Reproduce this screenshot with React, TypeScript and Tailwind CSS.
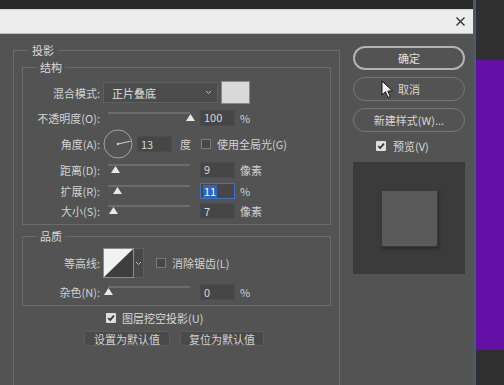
import React from "react";

function Thumb({ pct }: { pct: number }) {
  return (
    <svg
      width="9"
      height="7"
      viewBox="0 0 9 7"
      className="absolute top-[3px]"
      style={{ left: pct * 82 - 4.5 }}
    >
      <polygon points="4.5,0 9,7 0,7" fill="#e9e9e9" />
    </svg>
  );
}

function Slider({ pct }: { pct: number }) {
  return (
    <div className="relative ml-[8px] h-[14px] w-[82px] shrink-0">
      <div className="absolute left-0 right-0 top-[1px] h-[2px] bg-[#6c6c6c]" />
      <Thumb pct={pct} />
    </div>
  );
}

function NumField({ value, selected }: { value: string; selected?: boolean }) {
  return (
    <div
      className={`ml-[10px] flex h-[16px] w-[35px] shrink-0 items-center border pl-[2px] ${
        selected ? "border-[#3f74c4] bg-[#474747]" : "border-[#4c4c4c] bg-[#464646]"
      }`}
    >
      <span
        className={`px-[1px] leading-[13px] ${
          selected ? "bg-[#2a66c9] text-white" : "text-[#d8d8d8]"
        }`}
      >
        {value}
      </span>
    </div>
  );
}

function Check({ checked }: { checked?: boolean }) {
  if (checked) {
    return (
      <span className="flex h-[10px] w-[10px] shrink-0 items-center justify-center rounded-[1px] bg-[#dedede]">
        <svg width="8" height="8" viewBox="0 0 8 8">
          <path
            d="M1.2 4.2 L3.2 6.1 L6.9 1.6"
            fill="none"
            stroke="#333"
            strokeWidth="1.7"
          />
        </svg>
      </span>
    );
  }
  return (
    <span className="block h-[10px] w-[10px] shrink-0 border border-[#7a7a7a] bg-[#474747]" />
  );
}

function Label({ children }: { children: React.ReactNode }) {
  return (
    <span className="w-[77px] shrink-0 text-right text-[#d2d2d2]">
      {children}
    </span>
  );
}

function Chevron() {
  return (
    <svg width="7" height="5" viewBox="0 0 7 5">
      <path d="M1 1 L3.5 3.5 L6 1" fill="none" stroke="#bdbdbd" strokeWidth="1" />
    </svg>
  );
}

export default function App() {
  return (
    <div className="flex h-[385px] w-[504px] overflow-hidden bg-[#2c2c2c] font-['Noto_Sans_CJK_SC','Noto_Sans',sans-serif] text-[11px] leading-[14px]">
      {/* dialog */}
      <div className="flex w-[473px] shrink-0 flex-col">
        <div className="h-[9px] bg-[#2a2a2a]" />
        <div className="flex h-[25px] items-center justify-end border-t border-b border-t-[#c3d9ee] border-b-[#a8c0d8] bg-[#ececec] pr-[8px]">
          <svg width="9" height="9" viewBox="0 0 9 9">
            <path d="M0.5 0.5 L8.5 8.5 M8.5 0.5 L0.5 8.5" stroke="#2f2f2f" strokeWidth="1.3" />
          </svg>
        </div>

        <div className="relative flex flex-1 overflow-hidden bg-[#535353]">
          {/* left: settings */}
          <div className="w-[345px] shrink-0">
            <fieldset className="ml-[13px] mt-[9px] h-[400px] w-[327px] border border-[#6c6c6c]">
              <legend className="ml-[14px] px-[4px] text-[#dadada]">投影</legend>

              <fieldset className="ml-[8px] mt-[3px] w-[309px] border border-[#6c6c6c] pb-[3px] pt-[6px]">
                <legend className="ml-[14px] px-[3px] text-[#dadada]">结构</legend>

                <div className="flex h-[25px] items-center">
                  <Label>混合模式:</Label>
                  <div className="ml-[3px] flex h-[21px] w-[115px] items-center justify-between border border-[#5f5f5f] bg-[#4c4c4c] pl-[8px] pr-[5px] text-[#e0e0e0]">
                    <span>正片叠底</span>
                    <Chevron />
                  </div>
                  <div className="ml-[3px] h-[23px] w-[29px] border border-[#8a8a8a] bg-[#d9d9d9]" />
                </div>

                <div className="flex h-[25px] items-center">
                  <Label>不透明度(O):</Label>
                  <Slider pct={1} />
                  <NumField value="100" />
                  <span className="ml-[5px] text-[#d2d2d2]">%</span>
                </div>

                <div className="flex h-[28px] items-center">
                  <Label>角度(A):</Label>
                  <svg width="30" height="30" viewBox="0 0 30 30" className="ml-[3px] shrink-0">
                    <circle cx="15" cy="15" r="14" fill="none" stroke="#a3a3a3" strokeWidth="1" />
                    <circle cx="15" cy="15" r="1.2" fill="#d8d8d8" />
                    <path d="M15 15 L27.5 12.2" stroke="#cfcfcf" strokeWidth="1" />
                  </svg>
                  <div className="ml-[-6px]">
                    <NumField value="13" />
                  </div>
                  <span className="ml-[8px] text-[#d2d2d2]">度</span>
                  <span className="ml-[10px]">
                    <Check />
                  </span>
                  <span className="ml-[6px] text-[#d2d2d2]">使用全局光(G)</span>
                </div>

                <div className="flex h-[23px] items-center">
                  <Label>距离(D):</Label>
                  <Slider pct={0.09} />
                  <NumField value="9" />
                  <span className="ml-[5px] text-[#d2d2d2]">像素</span>
                </div>

                <div className="flex h-[20px] items-center">
                  <Label>扩展(R):</Label>
                  <Slider pct={0.11} />
                  <NumField value="11" selected />
                  <span className="ml-[5px] text-[#d2d2d2]">%</span>
                </div>

                <div className="flex h-[20px] items-center">
                  <Label>大小(S):</Label>
                  <Slider pct={0.07} />
                  <NumField value="7" />
                  <span className="ml-[5px] text-[#d2d2d2]">像素</span>
                </div>
              </fieldset>

              <fieldset className="ml-[8px] mt-[4px] w-[309px] border border-[#6c6c6c] pb-[3px] pt-[5px]">
                <legend className="ml-[14px] px-[3px] text-[#dadada]">品质</legend>

                <div className="flex h-[30px] items-center">
                  <Label>等高线:</Label>
                  <div className="ml-[3px] flex h-[30px] shrink-0">
                    <svg width="31" height="30" viewBox="0 0 31 30">
                      <rect x="0.5" y="0.5" width="30" height="29" fill="#3e3e3e" stroke="#8c8c8c" />
                      <polygon points="1,1 30,1 1,29" fill="#f2f2f2" />
                    </svg>
                    <div className="flex w-[10px] items-center justify-center border border-l-0 border-[#5e5e5e] bg-[#494949]">
                      <Chevron />
                    </div>
                  </div>
                  <span className="ml-[12px]">
                    <Check />
                  </span>
                  <span className="ml-[6px] text-[#d2d2d2]">消除锯齿(L)</span>
                </div>

                <div className="mt-[4px] flex h-[20px] items-center">
                  <Label>杂色(N):</Label>
                  <Slider pct={0} />
                  <NumField value="0" />
                  <span className="ml-[5px] text-[#d2d2d2]">%</span>
                </div>
              </fieldset>

              <div className="ml-[92px] mt-[6px] flex h-[12px] items-center gap-[6px]">
                <Check checked />
                <span className="text-[#d8d8d8]">图层挖空投影(U)</span>
              </div>

              <div className="ml-[70px] mt-[7px] flex gap-[10px]">
                <div className="flex h-[15px] w-[86px] items-center justify-center border border-[#5c5c5c] bg-[#4a4a4a] text-[#d4d4d4]">
                  设置为默认值
                </div>
                <div className="flex h-[15px] w-[84px] items-center justify-center border border-[#5c5c5c] bg-[#4a4a4a] text-[#d4d4d4]">
                  复位为默认值
                </div>
              </div>
            </fieldset>
          </div>

          {/* right: buttons + preview */}
          <div className="flex flex-col pl-[8px] pt-[12px]">
            <div className="flex h-[24px] w-[112px] items-center justify-center rounded-full border-2 border-[#b3b3b3] text-[#e2e2e2]">
              确定
            </div>
            <div className="mt-[7px] flex h-[24px] w-[112px] items-center justify-center rounded-full border-[1.5px] border-[#777] text-[#d6d6d6]">
              取消
            </div>
            <div className="mt-[7px] flex h-[24px] w-[112px] items-center justify-center rounded-full border-[1.5px] border-[#777] text-[#d6d6d6]">
              新建样式(W)...
            </div>
            <div className="ml-[23px] mt-[7px] flex h-[14px] items-center gap-[7px]">
              <Check checked />
              <span className="text-[#d8d8d8]">预览(V)</span>
            </div>
            <div className="mt-[9px] flex h-[112px] w-[112px] items-center justify-center bg-[#3b3b3b]">
              <div className="h-[57px] w-[57px] border border-[#383838] bg-[#5a5a5a] shadow-[1px_2px_3px_rgba(0,0,0,0.3)]" />
            </div>
          </div>

          {/* mouse pointer */}
          <svg width="13" height="19" viewBox="0 0 13 19" className="absolute left-[381px] top-[46px]">
            <path
              d="M1 1 L1 15 L4.5 11.8 L7 17.5 L9.2 16.5 L6.8 11 L11.5 11 Z"
              fill="#f4f4f4"
              stroke="#111"
              strokeWidth="1"
              strokeLinejoin="round"
            />
          </svg>
        </div>
      </div>

      {/* background behind dialog */}
      <div className="w-[3px] shrink-0 bg-[#4b5a70]" />
      <div className="flex flex-1 flex-col">
        <div className="h-[60px] bg-[#303030]" />
        <div className="h-[290px] bg-[#640fa6]" />
        <div className="flex-1 bg-[#2f2f2f]" />
      </div>
    </div>
  );
}
